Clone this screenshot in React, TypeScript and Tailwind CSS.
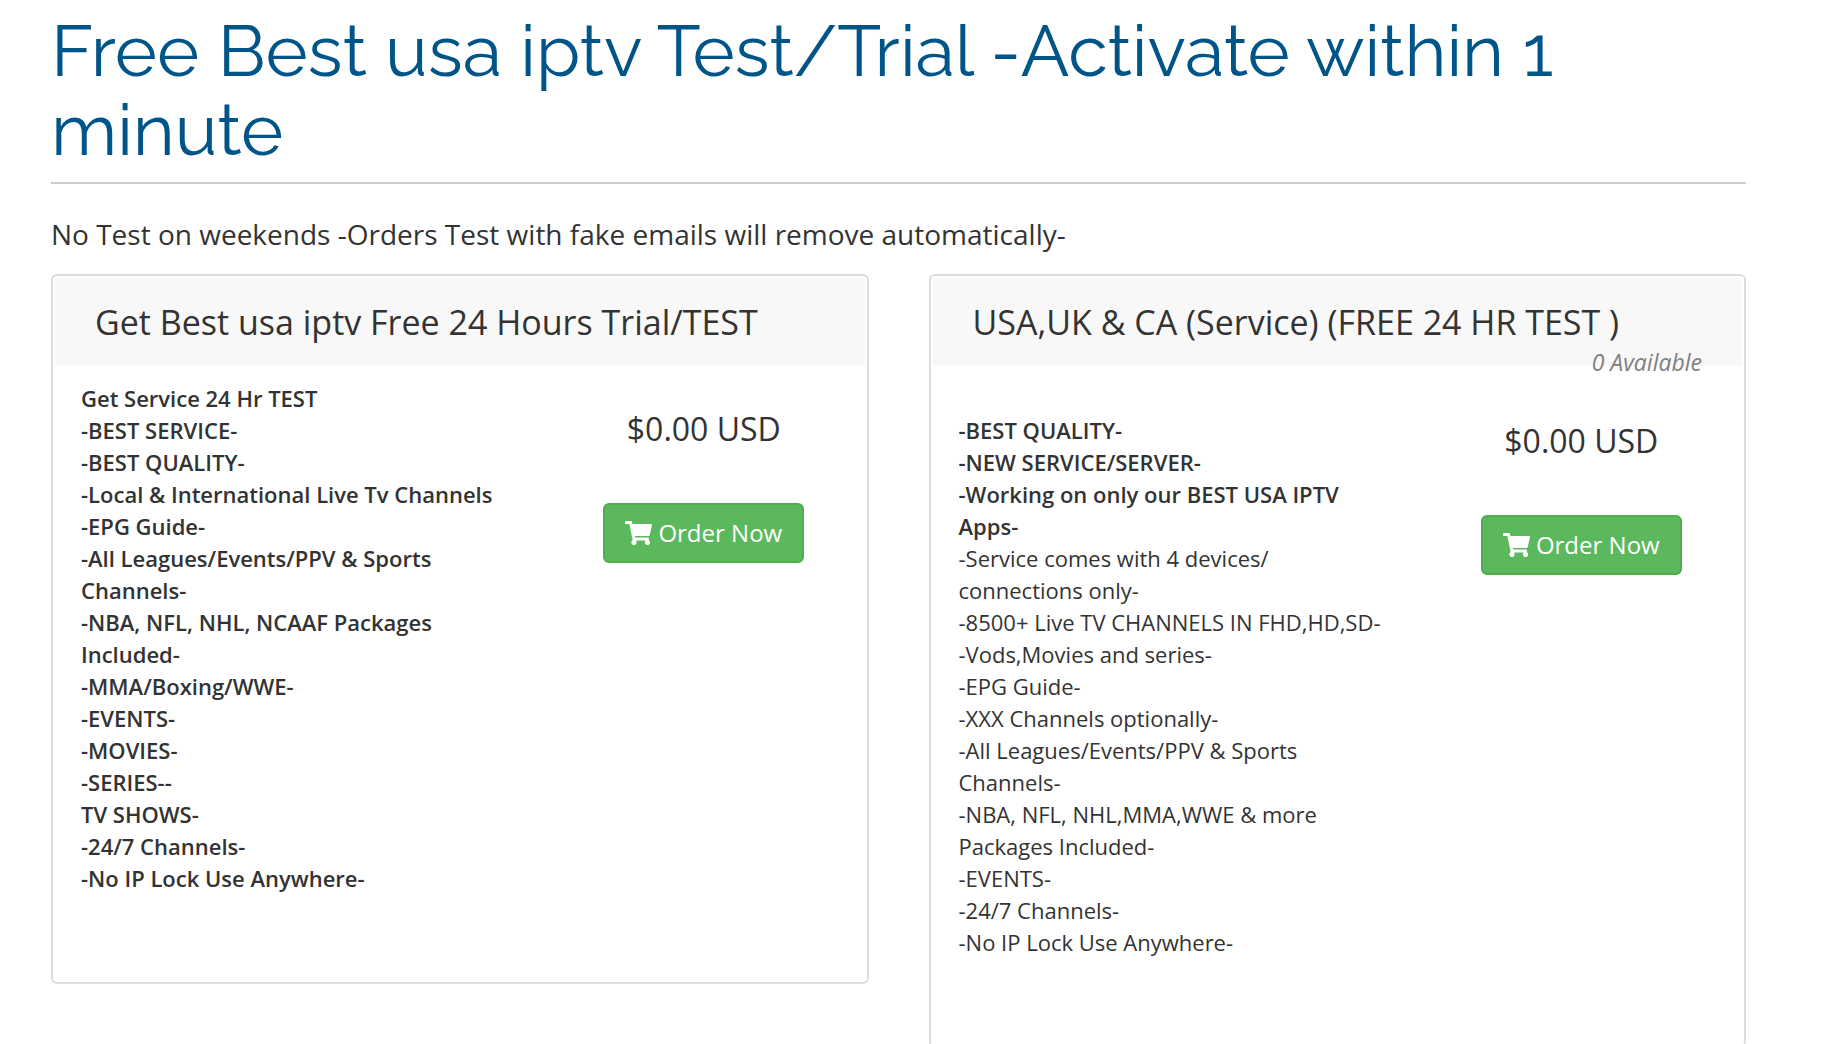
import { FaShoppingCart } from 'react-icons/fa';

const products = [
  {
    name: 'Get Best usa iptv Free 24 Hours Trial/TEST',
    qty: '',
    price: '$0.00 USD',
    strong: [
      'Get Service 24 Hr TEST',
      '-BEST SERVICE-',
      '-BEST QUALITY-',
      '-Local & International Live Tv Channels',
      '-EPG Guide-',
      '-All Leagues/Events/PPV & Sports Channels-',
      '-NBA, NFL, NHL, NCAAF Packages Included-',
      '-MMA/Boxing/WWE-',
      '-EVENTS-',
      '-MOVIES-',
      '-SERIES--',
      'TV SHOWS-',
      '-24/7 Channels-',
      '-No IP Lock Use Anywhere-',
    ],
    lines: [] as string[],
  },
  {
    name: 'USA,UK & CA (Service) (FREE 24 HR TEST )',
    qty: '0 Available',
    price: '$0.00 USD',
    strong: ['-BEST QUALITY-', '-NEW SERVICE/SERVER-', '-Working on only our BEST USA IPTV Apps-'],
    lines: [
      '-Service comes with 4 devices/ connections only-',
      '-8500+ Live TV CHANNELS IN FHD,HD,SD-',
      '-Vods,Movies and series-',
      '-EPG Guide-',
      '-XXX Channels optionally-',
      '-All Leagues/Events/PPV & Sports Channels-',
      '-NBA, NFL, NHL,MMA,WWE & more Packages Included-',
      '-EVENTS-',
      '-24/7 Channels-',
      '-No IP Lock Use Anywhere-',
    ],
  },
];

type Product = (typeof products)[number];

function ProductCard({ product }: { product: Product }) {
  return (
    <section className="rounded-md border-2 border-[#dddddd] bg-white p-0.5 pb-[88px]">
      <header className="flex min-h-[88px] items-center rounded-t bg-[#f8f8f8] px-10">
        <h2 className="text-[34px] leading-10">{product.name}</h2>
      </header>
      {/* stock count hangs over the bottom edge of the header */}
      {product.qty && (
        <p className="-mt-5 h-8 px-10 text-right text-[23px] leading-8 text-[#808080] italic">{product.qty}</p>
      )}
      <div className="flex justify-between pt-4 pr-6 pl-[26px]">
        <div className={`w-[57%] text-[22px] leading-8 ${product.qty ? 'pt-5' : ''}`}>
          {product.strong.map((line) => (
            <p key={line} className="font-semibold">{line}</p>
          ))}
          {product.lines.map((line) => (
            <p key={line}>{line}</p>
          ))}
        </div>
        <div className="flex w-[36%] flex-col items-center pt-6">
          <p className="text-[32px] leading-[46px]">{product.price}</p>
          <button
            type="button"
            className="mt-[51px] flex h-[60px] items-center gap-1.5 rounded-md border-2 border-[#4cae4c] bg-[#5cb85c] px-5 text-2xl whitespace-nowrap text-white hover:bg-[#449d44]"
          >
            <FaShoppingCart className="h-6 w-[27px]" />
            Order Now
          </button>
        </div>
      </div>
    </section>
  );
}

export default function App() {
  return (
    <main className="min-h-screen bg-white pr-[76px] pl-[51px] font-['Open_Sans',sans-serif] text-[#333333]">
      <h1 className="border-b-2 border-[#cccccc] pt-[11px] pb-[13px] font-['Raleway','Lato',sans-serif] text-[72px] leading-[79px] text-[#005588]">
        Free Best usa iptv Test/Trial -Activate within 1 minute
      </h1>
      <p className="mt-[30px] text-[28px] leading-10">
        No Test on weekends -Orders Test with fake emails will remove automatically-
      </p>
      <div className="mt-5 grid grid-cols-2 items-start gap-[60px]">
        {products.map((product) => (
          <ProductCard key={product.name} product={product} />
        ))}
      </div>
    </main>
  );
}
